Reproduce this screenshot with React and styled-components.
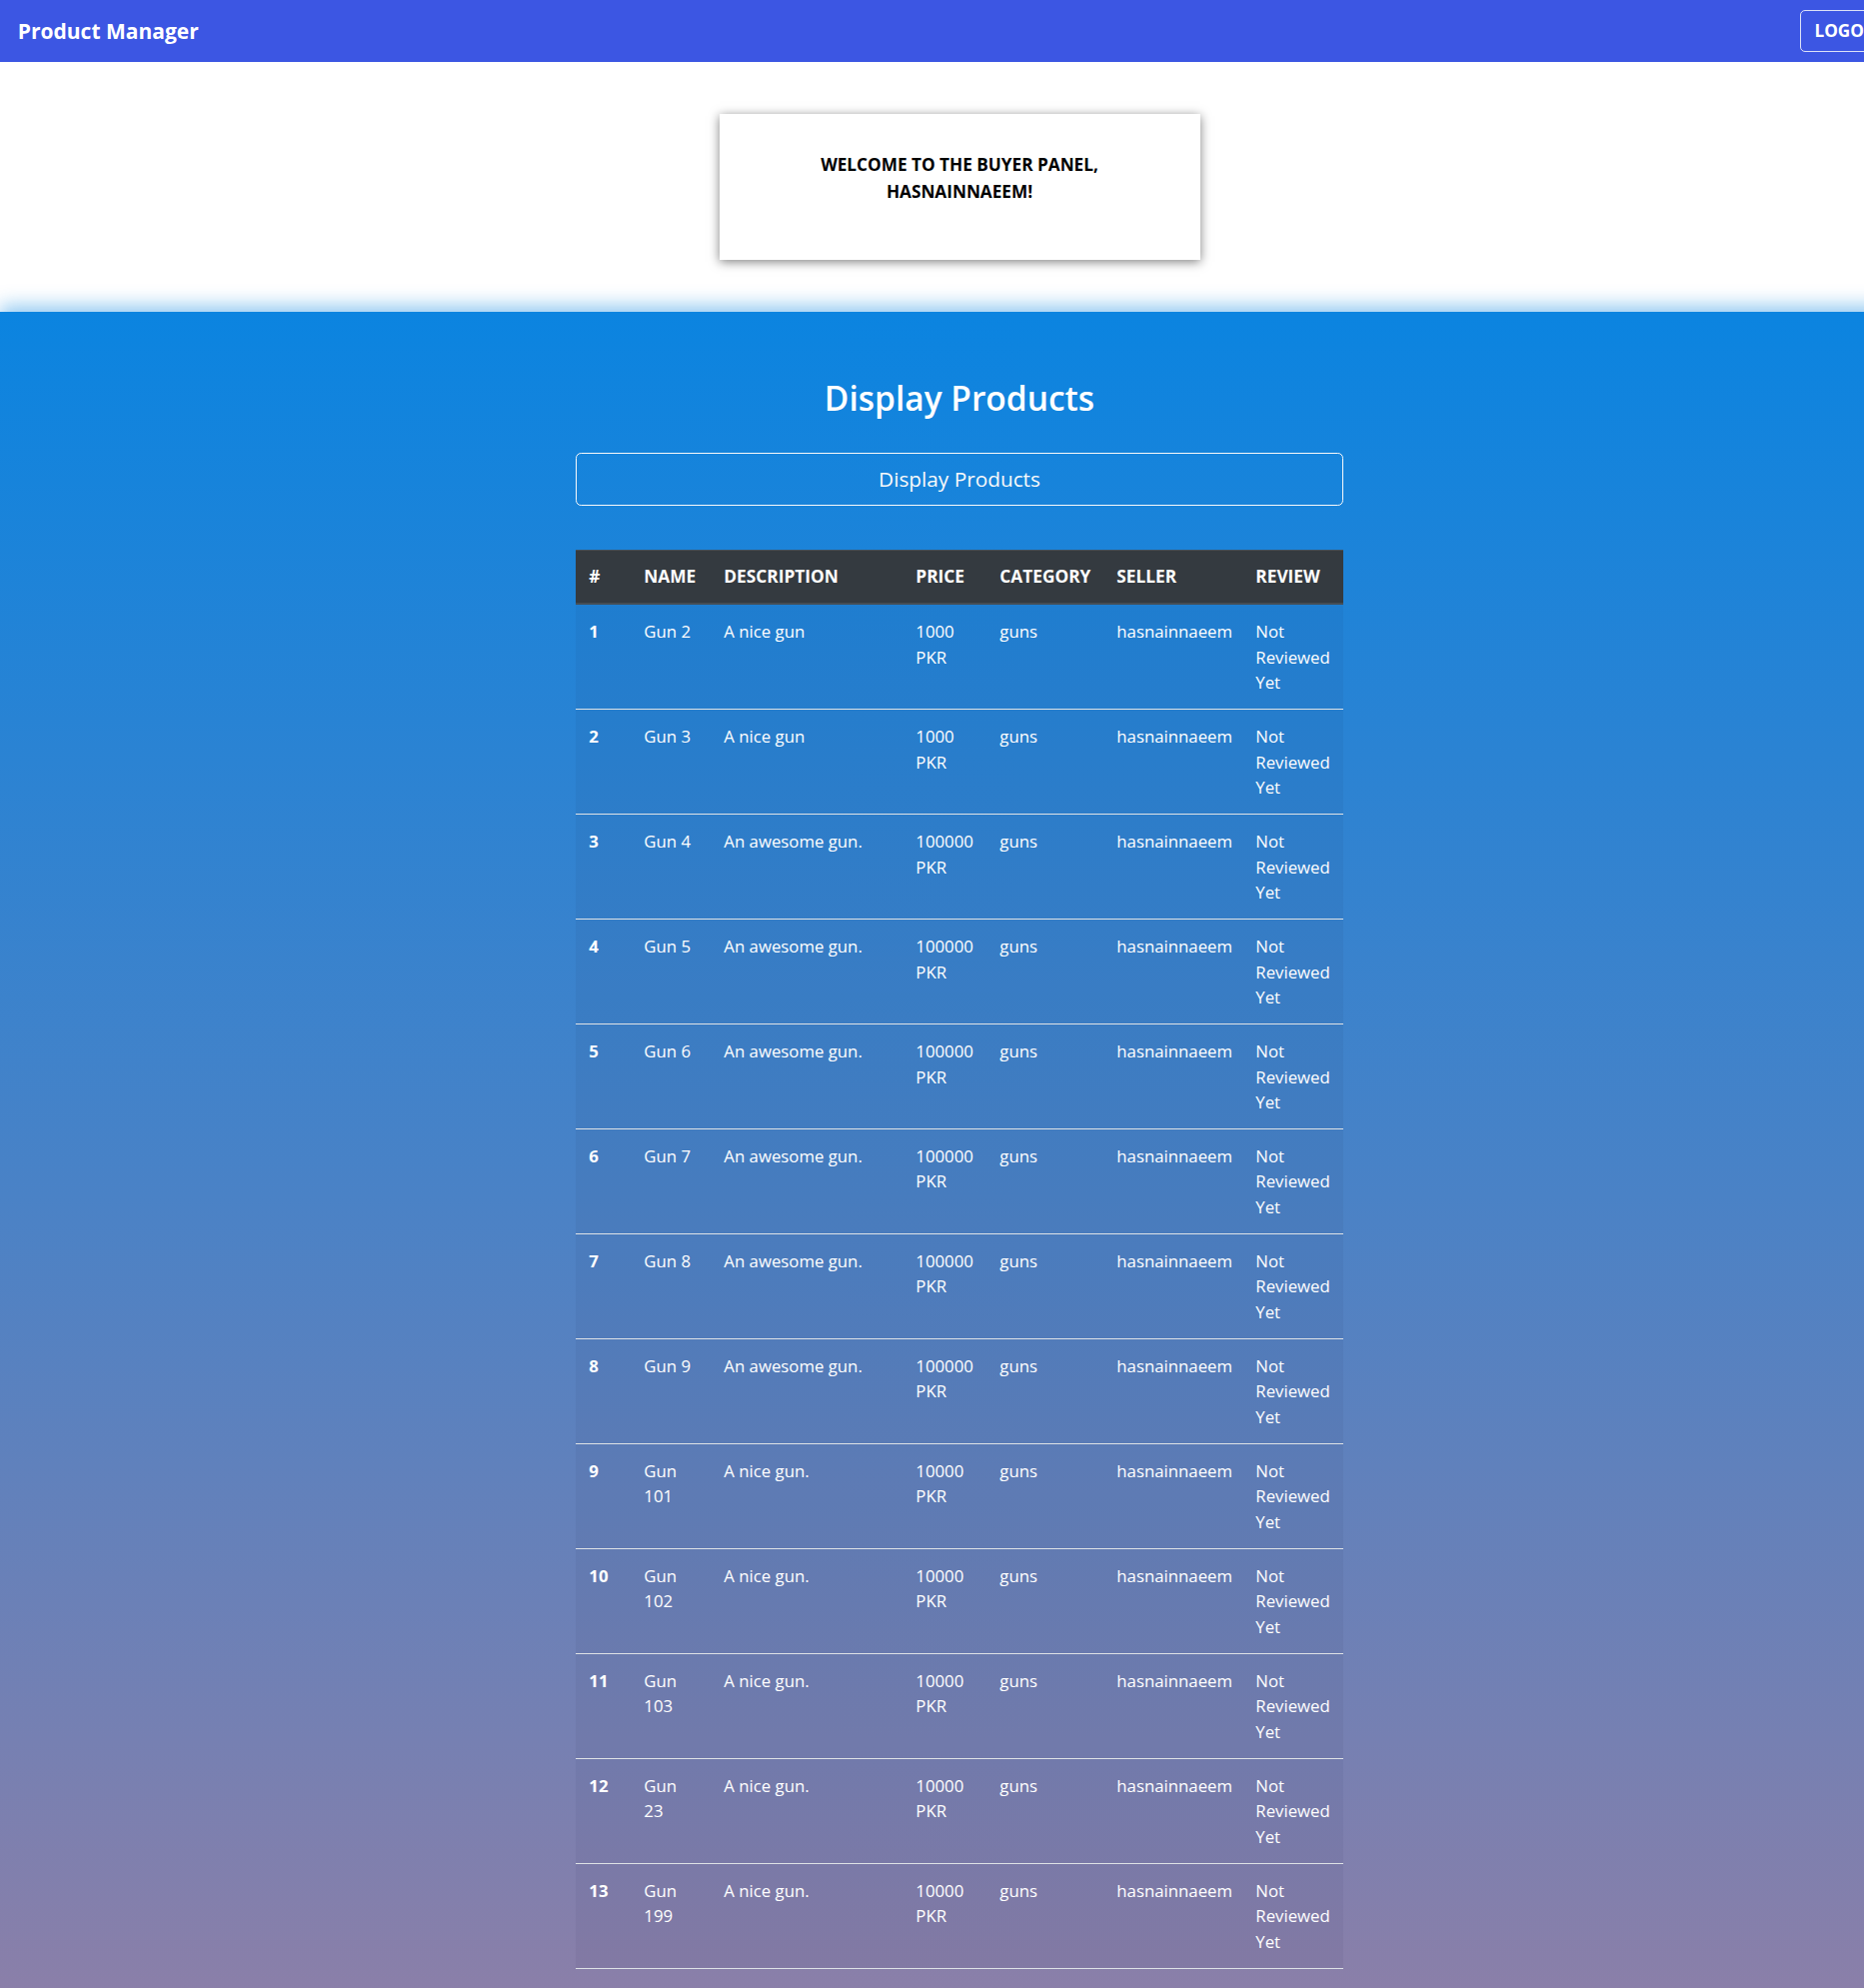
import React from "react";
import styled, { createGlobalStyle } from "styled-components";

const GlobalStyle = createGlobalStyle`
  html, body {
    margin: 0;
    padding: 0;
    overflow-x: hidden;
  }
  body {
    font-family: "Open Sans", "Noto Sans", sans-serif;
    background: #ffffff;
    color: #212529;
  }
  #root {
    width: 1920px;
  }
  * { box-sizing: border-box; }
`;

const Navbar = styled.nav`
  height: 62px;
  padding: 0 17.8px;
  display: flex;
  align-items: center;
  justify-content: space-between;
  background: #3c56e3;
`;

const Brand = styled.a`
  color: #ffffff;
  font-weight: 700;
  font-size: 21px;
  line-height: 33px;
  text-decoration: none;
`;

const LogoutButton = styled.button`
  font-family: inherit;
  font-weight: 700;
  font-size: 17.2px;
  line-height: 26.6px;
  padding: 6.7px 13.3px;
  color: #ffffff;
  background: transparent;
  border: 1px solid rgba(248, 249, 250, 0.85);
  border-radius: 5px;
  text-transform: uppercase;
  cursor: pointer;
`;

const WelcomeArea = styled.header`
  padding: 52px 0;
  display: flex;
  justify-content: center;
`;

const WelcomeCard = styled.div`
  width: 481px;
  height: 146px;
  padding: 38px 50px 0;
  background: #ffffff;
  text-align: center;
  box-shadow: 0 2px 10px rgba(0, 0, 0, 0.5);
`;

const WelcomeText = styled.h5`
  margin: 0;
  font-size: 17.2px;
  line-height: 26.6px;
  font-weight: 700;
  color: #000000;
  text-transform: uppercase;
`;

const ProductsSection = styled.section`
  position: relative;
  padding: 66px 0 42px;
  background: linear-gradient(180deg, #0b84e0 0%, #4a82c6 52%, #8c7fa8 100%);
  box-shadow: 0 -6px 18px rgba(11, 132, 224, 0.45);
`;

const Container = styled.div`
  width: 768px;
  margin: 0 auto;
`;

const Title = styled.h2`
  margin: 0;
  text-align: center;
  color: #ffffff;
  font-size: 33.5px;
  line-height: 40.8px;
  font-weight: 600;
`;

const OutlineButton = styled.button`
  display: block;
  width: 100%;
  margin-top: 34.5px;
  padding: 8.9px 17.8px;
  font-family: inherit;
  font-size: 20.8px;
  line-height: 33px;
  font-weight: 400;
  color: #f8f9fa;
  background: transparent;
  border: 1px solid #f8f9fa;
  border-radius: 5.3px;
  cursor: pointer;
`;

const Table = styled.table`
  width: 768px;
  margin-top: 44px;
  border-collapse: collapse;
  table-layout: fixed;
  color: #ffffff;
  font-size: 16.8px;
  line-height: 25.8px;
  border-bottom: 1px solid #dee2e6;
`;

const HeadCell = styled.th`
  padding: 13.3px;
  text-align: left;
  font-size: 17.3px;
  font-weight: 700;
  text-transform: uppercase;
  background: #343a40;
  border-top: 1px solid #454d55;
  border-bottom: 2px solid #454d55;
  white-space: nowrap;
`;

const Row = styled.tr`
  background: rgba(20, 20, 60, 0.05);
`;

const Cell = styled.td`
  padding: 13.3px;
  vertical-align: top;
  border-top: 1px solid #dee2e6;
  font-weight: ${(p) => (p.$strong ? 700 : 400)};
`;

const columns = [
  { key: "#", width: 55 },
  { key: "Name", width: 80 },
  { key: "Description", width: 192 },
  { key: "Price", width: 84 },
  { key: "Category", width: 117 },
  { key: "Seller", width: 139 },
  { key: "Review", width: 101 },
];

const raw = [
  ["Gun 2", "A nice gun", "1000"],
  ["Gun 3", "A nice gun", "1000"],
  ["Gun 4", "An awesome gun.", "100000"],
  ["Gun 5", "An awesome gun.", "100000"],
  ["Gun 6", "An awesome gun.", "100000"],
  ["Gun 7", "An awesome gun.", "100000"],
  ["Gun 8", "An awesome gun.", "100000"],
  ["Gun 9", "An awesome gun.", "100000"],
  ["Gun 101", "A nice gun.", "10000"],
  ["Gun 102", "A nice gun.", "10000"],
  ["Gun 103", "A nice gun.", "10000"],
  ["Gun 23", "A nice gun.", "10000"],
  ["Gun 199", "A nice gun.", "10000"],
];

const products = raw.map(([name, description, price], i) => ({
  id: i + 1,
  name,
  description,
  price: `${price} PKR`,
  category: "guns",
  seller: "hasnainnaeem",
  review: "Not Reviewed Yet",
}));

export default function App() {
  return (
    <>
      <GlobalStyle />
      <Navbar>
        <Brand href="#">Product Manager</Brand>
        <LogoutButton>Logout</LogoutButton>
      </Navbar>
      <WelcomeArea>
        <WelcomeCard>
          <WelcomeText>Welcome to the buyer panel, hasnainnaeem!</WelcomeText>
        </WelcomeCard>
      </WelcomeArea>
      <ProductsSection>
        <Container>
          <Title>Display Products</Title>
          <OutlineButton>Display Products</OutlineButton>
          <Table>
            <colgroup>
              {columns.map((c) => (
                <col key={c.key} style={{ width: c.width }} />
              ))}
            </colgroup>
            <thead>
              <tr>
                {columns.map((c) => (
                  <HeadCell key={c.key}>{c.key}</HeadCell>
                ))}
              </tr>
            </thead>
            <tbody>
              {products.map((p) => (
                <Row key={p.id}>
                  <Cell $strong>{p.id}</Cell>
                  <Cell>{p.name}</Cell>
                  <Cell>{p.description}</Cell>
                  <Cell>{p.price}</Cell>
                  <Cell>{p.category}</Cell>
                  <Cell>{p.seller}</Cell>
                  <Cell>{p.review}</Cell>
                </Row>
              ))}
            </tbody>
          </Table>
        </Container>
      </ProductsSection>
    </>
  );
}
